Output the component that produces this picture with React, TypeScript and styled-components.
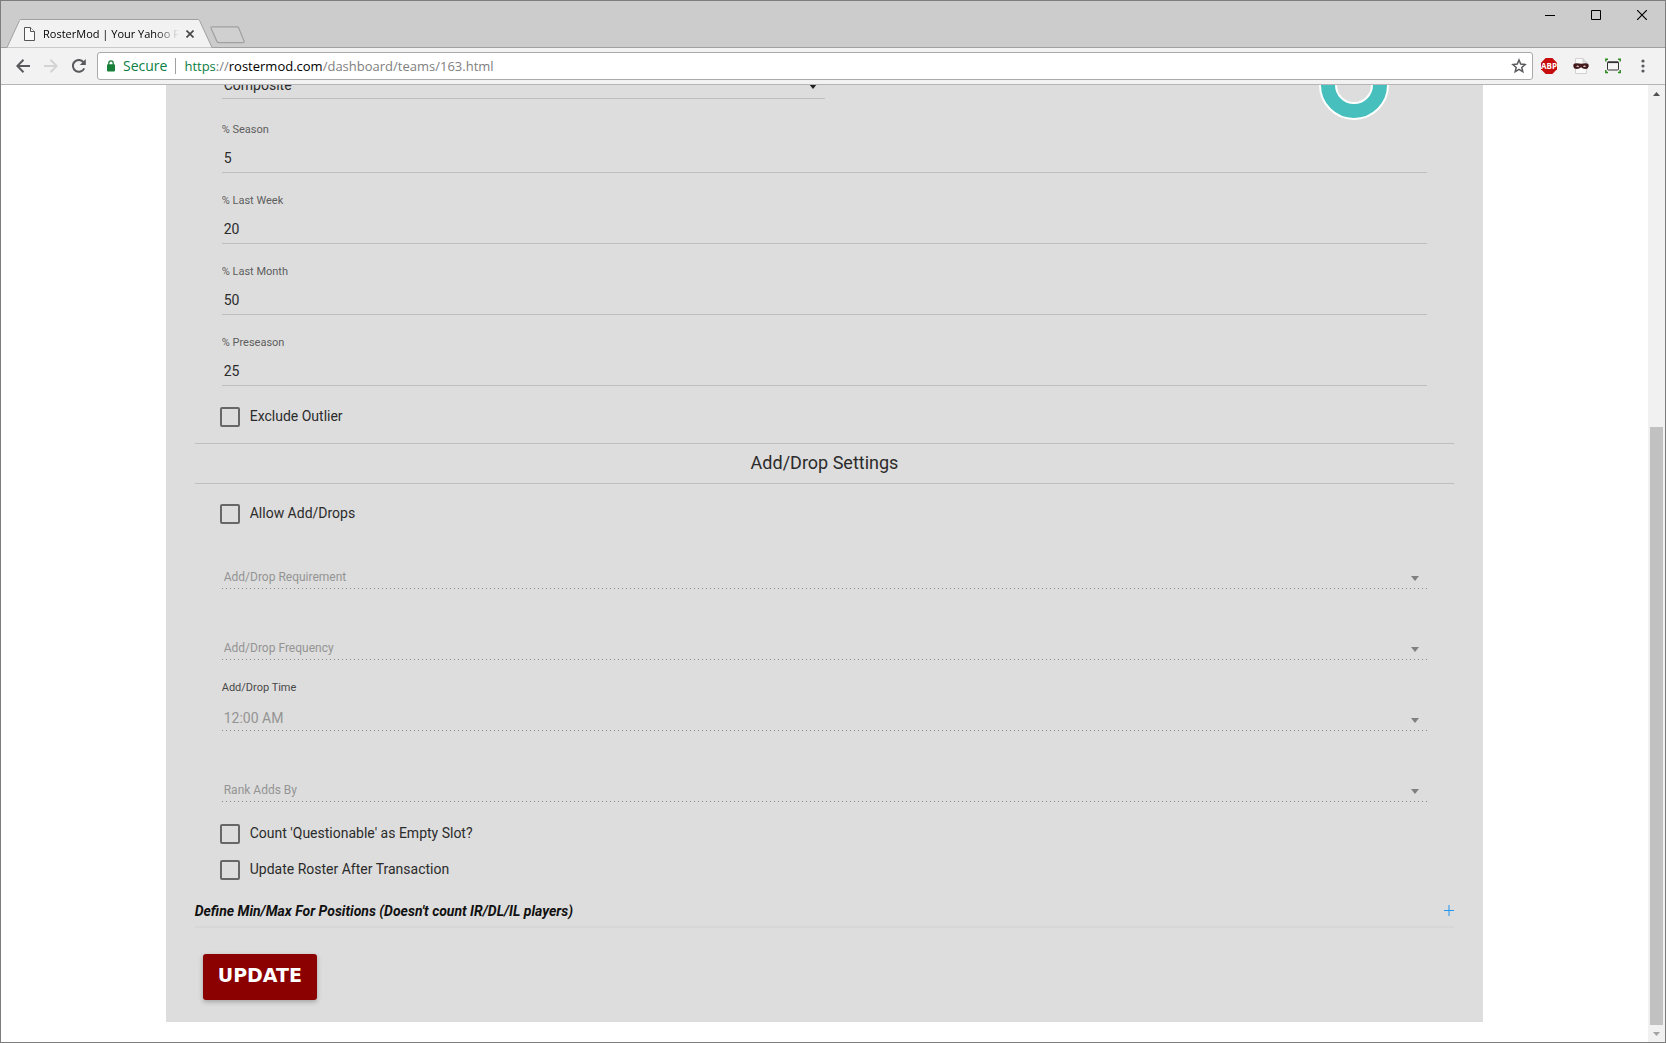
import React from "react";
import styled, { createGlobalStyle } from "styled-components";

const GlobalStyle = createGlobalStyle`
  *, *::before, *::after { box-sizing: border-box; }
  body { margin: 0; }
`;

const uiFont = `"Open Sans", "Noto Sans", sans-serif`;
const pageFont = `Roboto, "Liberation Sans", sans-serif`;

/* ---------- Browser window ---------- */

const BrowserWindow = styled.div`
  display: flex;
  flex-direction: column;
  height: 100vh;
  border: 1px solid #7d7d7d;
  background: #fff;
  font-family: ${uiFont};
`;

const TitleBar = styled.header`
  display: flex;
  align-items: flex-end;
  justify-content: space-between;
  flex: none;
  height: 47px;
  padding-left: 6px;
  background: #ccc;
  border-bottom: 1px solid #a0a0a0;
`;

const TabStrip = styled.div`
  display: flex;
  align-items: flex-end;
`;

const Tab = styled.div`
  position: relative;
  display: flex;
  align-items: center;
  width: 206px;
  height: 29px;
  margin-bottom: -1px;
  padding: 1px 10px 0 17px;
`;

const TabShape = styled.svg`
  position: absolute;
  inset: 0;
`;

const TabIcon = styled.svg`
  position: relative;
  flex: none;
`;

const TabTitle = styled.span`
  position: relative;
  flex: none;
  width: 136px;
  margin-left: 8px;
  white-space: nowrap;
  font-size: 11px;
  line-height: 16px;
  color: #000;
  mask-image: linear-gradient(to right, #000 112px, transparent 136px);
`;

const PlainButton = styled.button`
  display: flex;
  align-items: center;
  justify-content: center;
  flex: none;
  padding: 0;
  border: 0;
  background: none;
  color: #5a5a5e;
`;

const TabClose = styled(PlainButton)`
  position: relative;
  width: 16px;
  height: 16px;
  margin-left: 3px;
`;

const NewTab = styled(PlainButton)`
  margin: 0 0 3px -3px;
`;

const WindowControls = styled.div`
  display: flex;
  align-self: flex-start;
`;

const WindowButton = styled(PlainButton)`
  width: 46px;
  height: 28px;
  color: #000;
`;

const Toolbar = styled.div`
  display: flex;
  align-items: center;
  flex: none;
  height: 37px;
  padding: 0 8px;
  background: #f2f2f2;
  border-bottom: 1px solid #b6b4b6;
`;

const NavButton = styled(PlainButton)<{ $muted?: boolean }>`
  width: 28px;
  height: 28px;
  color: ${(p) => (p.$muted ? "#d3d3d3" : "#5a5a5e")};
`;

const AddressBar = styled.div`
  display: flex;
  align-items: center;
  flex: 1;
  min-width: 0;
  height: 28px;
  margin-left: 4px;
  padding: 0 5px 0 9px;
  background: #fff;
  border: 1px solid #a9a9a9;
  border-radius: 3px;
  font-size: 14px;
  line-height: 20px;
  white-space: nowrap;
`;

const Secure = styled.span`
  margin-left: 8px;
  padding-right: 8px;
  color: #0b8043;
`;

const UrlDivider = styled.span`
  width: 1px;
  height: 16px;
  margin-right: 8px;
  background: #a0a0a0;
`;

const Url = styled.span`
  flex: 1;
  min-width: 0;
  overflow: hidden;
  font-size: 13px;
  color: #808080;
`;

const Scheme = styled.span`
  color: #0b8043;
`;

const Host = styled.span`
  color: #000;
`;

const Extensions = styled.div`
  display: flex;
  flex: none;
`;

const ExtensionButton = styled(PlainButton)`
  width: 32px;
  height: 28px;
`;

const MenuButton = styled(ExtensionButton)`
  width: 28px;
`;

/* ---------- Viewport and scroll bar ---------- */

const Viewport = styled.div`
  display: flex;
  flex: 1;
  min-height: 0;
`;

/* The page rests at the end of its scroll range. */
const ScrolledPage = styled.main`
  display: flex;
  flex-direction: column;
  align-items: center;
  justify-content: flex-end;
  flex: 1;
  min-width: 0;
  overflow: hidden;
  padding-bottom: 20px;
  font-family: ${pageFont};
  font-size: 14px;
  color: #2b2b2b;
`;

const ScrollBar = styled.div`
  display: flex;
  flex-direction: column;
  flex: none;
  width: 17px;
  background: #f1f1f1;
`;

const ScrollArrow = styled(PlainButton)<{ $muted?: boolean }>`
  height: 17px;
  color: ${(p) => (p.$muted ? "#a3a3a3" : "#505050")};
`;

const ScrollTrack = styled.div`
  display: grid;
  grid-template-rows: 325fr 598fr;
  flex: 1;
  padding: 0 2px;
`;

const ScrollThumb = styled.div`
  grid-row: 2;
  background: #c1c1c1;
`;

/* ---------- Settings form ---------- */

const Panel = styled.form`
  flex: none;
  width: 80%;
  padding: 0 29px 22px;
  background: #ddd;
`;

const Section = styled.section`
  padding: 0 27px;
`;

const Fields = styled.div`
  display: flex;
  flex-direction: column;
  gap: 20px;
`;

const TopRow = styled.div`
  display: flex;
  align-items: flex-end;
  justify-content: space-between;
  margin-bottom: 3px;
`;

const Chart = styled.svg`
  flex: none;
  margin: 0 38px -21px 0;
`;

const Field = styled.div<{ $half?: boolean }>`
  display: flex;
  flex-direction: column;
  width: ${(p) => (p.$half ? "50%" : "auto")};
`;

const FieldLabel = styled.label<{ $strong?: boolean }>`
  height: 16px;
  font-size: 11px;
  line-height: 16px;
  color: ${(p) => (p.$strong ? "#484848" : "#5e5e5e")};
`;

const NumberInput = styled.input`
  width: 100%;
  height: 35px;
  padding: 5px 2px 0;
  border: 0;
  border-bottom: 1px solid #bebebe;
  border-radius: 0;
  outline: 0;
  background: none;
  font-family: inherit;
  font-size: 14px;
  color: #2b2b2b;
`;

const SelectBox = styled.div<{ $disabled?: boolean }>`
  display: grid;
  align-items: center;
  height: 35px;
  color: ${(p) => (p.$disabled ? "#808080" : "#212121")};
  background: ${(p) =>
    p.$disabled
      ? "repeating-linear-gradient(to right, #8a8a8a 0 1px, transparent 1px 4px) bottom / 100% 1px no-repeat"
      : "linear-gradient(#bebebe, #bebebe) bottom / 100% 1px no-repeat"};

  > * { grid-area: 1 / 1; }

  > svg { margin-top: ${(p) => (p.$disabled ? "14px" : "10px")}; }
`;

const Select = styled.select<{ $placeholder?: boolean }>`
  appearance: none;
  width: 100%;
  height: 34px;
  padding: 6px 2px 0;
  border: 0;
  border-radius: 0;
  outline: 0;
  background: none;
  font-family: inherit;
  font-size: ${(p) => (p.$placeholder ? "12px" : "14px")};
  color: #2b2b2b;

  &:disabled {
    padding-top: ${(p) => (p.$placeholder ? "11px" : "9px")};
    opacity: 1;
    color: #949494;
  }
`;

const SelectArrow = styled.svg`
  justify-self: end;
  margin-right: 8px;
  pointer-events: none;
`;

const CheckRow = styled.label`
  display: flex;
  align-items: center;
  gap: 10px;
  height: 36px;
  margin-left: -2px;
  padding-bottom: 3px;
  line-height: 20px;
`;

const CheckBox = styled.input`
  appearance: none;
  flex: none;
  width: 20px;
  height: 20px;
  margin: 3px 0 0;
  border: 2px solid #676767;
  border-radius: 2px;
`;

const CheckGroup = styled.div<{ $top: number; $bottom: number }>`
  padding: ${(p) => p.$top}px 0 ${(p) => p.$bottom}px;
`;

const SectionTitle = styled.h2`
  margin: 0;
  padding-bottom: 2px;
  border: solid #bebebe;
  border-width: 1px 0;
  font-size: 18px;
  font-weight: 400;
  line-height: 37px;
  text-align: center;
`;

const Expander = styled.button`
  display: flex;
  align-items: center;
  justify-content: space-between;
  width: 100%;
  height: 40px;
  padding: 7px 0 0;
  border: 0;
  border-bottom: 2px solid #d7d7d7;
  background: none;
  font-family: inherit;
  font-size: 14px;
  font-style: italic;
  font-weight: 700;
  line-height: 20px;
  color: #111;
`;

const SubmitButton = styled.button`
  display: block;
  height: 46px;
  margin: 26px 0 0 8px;
  padding: 0 15px 4px;
  border: 0;
  border-radius: 3px;
  background: #8b0000;
  box-shadow: 0 2px 5px rgba(0, 0, 0, 0.26);
  font-family: "DejaVu Sans", sans-serif;
  font-size: 19px;
  font-weight: 700;
  color: #fff;
`;

/* ---------- Parts ---------- */

const Caret = () => (
  <SelectArrow width="8" height="5" viewBox="0 0 8 5" aria-hidden="true">
    <path d="M0 0h8L4 5z" fill="currentColor" />
  </SelectArrow>
);

type NumberFieldProps = { id: string; label: string; value: string };

const NumberField = ({ id, label, value }: NumberFieldProps) => (
  <Field>
    <FieldLabel htmlFor={id}>{label}</FieldLabel>
    <NumberInput id={id} type="text" inputMode="numeric" defaultValue={value} />
  </Field>
);

type SelectFieldProps = {
  id: string;
  value: string;
  label?: string;
  disabled?: boolean;
  half?: boolean;
  name?: string;
};

const SelectField = ({ id, value, label, disabled, half, name }: SelectFieldProps) => (
  <Field $half={half}>
    <FieldLabel htmlFor={id} $strong>{label}</FieldLabel>
    <SelectBox $disabled={disabled}>
      <Select
        id={id}
        disabled={disabled}
        $placeholder={disabled && !label}
        aria-label={label ? undefined : name ?? value}
      >
        <option>{value}</option>
      </Select>
      <Caret />
    </SelectBox>
  </Field>
);

const Check = ({ label }: { label: string }) => (
  <CheckRow>
    <CheckBox type="checkbox" />
    {label}
  </CheckRow>
);

const Chrome = () => (
  <>
    <TitleBar>
      <TabStrip>
        <Tab>
          <TabShape width="206" height="29" viewBox="0 0 206 29" aria-hidden="true">
            <path d="M0 28.5 12.5 1.5Q13 .5 14 .5H191Q192 .5 192.500 1.500L205 28.500" fill="#f2f2f2" stroke="#a0a0a0" />
          </TabShape>
          <TabIcon width="11" height="14" viewBox="0 0 11 14" fill="#fafafa" stroke="#555" aria-hidden="true">
            <path d="M.5.5h6l4 4v9H.5z" />
            <path d="M6.500.500v4h4" />
          </TabIcon>
          <TabTitle>RosterMod | Your Yahoo F</TabTitle>
          <TabClose aria-label="Close tab">
            <svg width="8" height="8" viewBox="0 0 8 8" stroke="#444" strokeWidth="1.6">
              <path d="M.5.5l7 7M7.500.500l-7 7" />
            </svg>
          </TabClose>
        </Tab>
        <NewTab aria-label="New tab">
          <svg width="35" height="18" viewBox="0 0 35 18">
            <path d="M2 .8H27Q28 .8 28.600 1.700L34 15Q34.400 16.700 33 16.700H9Q7.500 16.700 7 15.500L1 2.200Q.6 .8 2 .8Z" fill="#d0d0d0" stroke="#a0a0a0" strokeWidth="1.200" />
          </svg>
        </NewTab>
      </TabStrip>
      <WindowControls>
        <WindowButton aria-label="Minimize">
          <svg width="10" height="10" viewBox="0 0 10 10"><path d="M0 5.500h10" stroke="currentColor" /></svg>
        </WindowButton>
        <WindowButton aria-label="Maximize">
          <svg width="10" height="10" viewBox="0 0 10 10"><path d="M.5.500h9v9h-9z" fill="none" stroke="currentColor" /></svg>
        </WindowButton>
        <WindowButton aria-label="Close">
          <svg width="10" height="10" viewBox="0 0 10 10"><path d="M0 0l10 10M10 0L0 10" stroke="currentColor" strokeWidth="1.200" /></svg>
        </WindowButton>
      </WindowControls>
    </TitleBar>
    <Toolbar>
      <NavButton aria-label="Back">
        <svg width="14" height="14" viewBox="0 0 14 14" fill="none" stroke="currentColor" strokeWidth="2">
          <path d="M14 7H1.500M7.500.700 1.300 7l6.200 6.300" />
        </svg>
      </NavButton>
      <NavButton aria-label="Forward" $muted>
        <svg width="14" height="14" viewBox="0 0 14 14" fill="none" stroke="currentColor" strokeWidth="2">
          <path d="M0 7h12.500M6.500.700 12.700 7l-6.200 6.300" />
        </svg>
      </NavButton>
      <NavButton aria-label="Reload">
        <svg width="14" height="14" viewBox="0 0 14 14" fill="none" stroke="currentColor" strokeWidth="2">
          <path d="M12.200 9.300A5.900 5.900 0 1 1 11.300 3L12 4" />
          <path d="M13.800 0v6H7.800z" fill="currentColor" stroke="none" />
        </svg>
      </NavButton>
      <AddressBar>
        <svg width="8" height="12" viewBox="0 0 8 12" aria-hidden="true">
          <path d="M1.800 5V3a2.200 2.200 0 0 1 4.400 0v2" fill="none" stroke="#188038" strokeWidth="1.300" />
          <rect y="4.200" width="8" height="7.300" rx="1" fill="#188038" />
        </svg>
        <Secure>Secure</Secure>
        <UrlDivider />
        <Url>
          <Scheme>https</Scheme>://<Host>rostermod.com</Host>/dashboard/teams/163.html
        </Url>
        <PlainButton aria-label="Bookmark this page">
          <svg width="16" height="16" viewBox="0 0 16 16" fill="none" stroke="currentColor" strokeWidth="1.500">
            <path d="M8 2l1.700 4.100 4.400.4-3.300 2.900 1 4.300L8 11.400l-3.800 2.300 1-4.300L1.900 6.500l4.400-.4z" />
          </svg>
        </PlainButton>
      </AddressBar>
      <Extensions>
        <ExtensionButton aria-label="Adblock Plus">
          <svg width="16" height="16" viewBox="0 0 16 16">
            <path d="M4.700 0h6.600L16 4.700v6.600L11.300 16H4.700L0 11.300V4.700z" fill="#c70d0d" />
            <text x="8" y="11" textAnchor="middle" fontFamily="Open Sans, sans-serif" fontWeight="700" fontSize="8" fill="#fff">ABP</text>
          </svg>
        </ExtensionButton>
        <ExtensionButton aria-label="Private page">
          <svg width="16" height="16" viewBox="0 0 16 16">
            <path d="M2.500.500h7.500l3.500 3.500v11.500h-11z" fill="#fafafa" stroke="#d2d2d2" />
            <path d="M10 .5V4h3.500" fill="#ddd" stroke="#ccc" />
            <path d="M1.500 5.500Q4.500 4.800 8 5.800 11.500 4.800 14.500 5.500 16 6.200 15.700 8.500 15 11 12.500 11 9.500 11 8 9.300 6.500 11 3.500 11 1 11 .3 8.500 0 6.200 1.500 5.500z" fill="#43191b" />
            <path d="M3 8.200q1.700-1.300 3.200.2-1.500 1.200-3.200-.2zM10 8.400q1.500-1.500 3.200-.2-1.700 1.400-3.200.2z" fill="#d8cccc" />
          </svg>
        </ExtensionButton>
        <ExtensionButton aria-label="Capture page">
          <svg width="16" height="16" viewBox="0 0 16 16" fill="none">
            <path d="M.8 3.500V1.300H3M13 1.300h2.200v2.200M15.200 12v2.500H13M3 14.500H.8V12" stroke="#2e8b20" strokeWidth="1.500" />
            <rect x="2.500" y="4" width="11" height="8" rx="1" fill="#f5f5f5" stroke="#333" />
            <path d="M2.500 4.300h11" stroke="#333" strokeWidth="1.600" />
          </svg>
        </ExtensionButton>
        <MenuButton aria-label="Menu">
          <svg width="4" height="14" viewBox="0 0 4 14" fill="currentColor">
            <circle cx="2" cy="2" r="1.600" />
            <circle cx="2" cy="7" r="1.600" />
            <circle cx="2" cy="12" r="1.600" />
          </svg>
        </MenuButton>
      </Extensions>
    </Toolbar>
  </>
);

const percentages: NumberFieldProps[] = [
  { id: "season", label: "% Season", value: "5" },
  { id: "last-week", label: "% Last Week", value: "20" },
  { id: "last-month", label: "% Last Month", value: "50" },
  { id: "preseason", label: "% Preseason", value: "25" },
];

export default function App() {
  return (
    <BrowserWindow>
      <GlobalStyle />
      <Chrome />
      <Viewport>
        <ScrolledPage>
          <Panel onSubmit={(e: React.FormEvent) => e.preventDefault()}>
            <Section>
              <Fields>
                <TopRow>
                  <SelectField id="ranking" value="Composite" name="Ranking" half />
                  <Chart width="70" height="70" viewBox="0 0 70 70" aria-hidden="true">
                    <circle cx="35" cy="35" r="26" fill="none" stroke="#fff" strokeWidth="18" />
                    <circle cx="35" cy="35" r="26" fill="none" stroke="#46bfbd" strokeWidth="14" />
                  </Chart>
                </TopRow>
                {percentages.map((field) => (
                  <NumberField key={field.id} {...field} />
                ))}
              </Fields>
              <CheckGroup $top={13} $bottom={8}>
                <Check label="Exclude Outlier" />
              </CheckGroup>
            </Section>
            <SectionTitle>Add/Drop Settings</SectionTitle>
            <Section>
              <CheckGroup $top={12} $bottom={6}>
                <Check label="Allow Add/Drops" />
              </CheckGroup>
              <Fields>
                <SelectField id="requirement" value="Add/Drop Requirement" disabled />
                <SelectField id="frequency" value="Add/Drop Frequency" disabled />
                <SelectField id="time" label="Add/Drop Time" value="12:00 AM" disabled />
                <SelectField id="rank" value="Rank Adds By" disabled />
              </Fields>
              <CheckGroup $top={14} $bottom={0}>
                <Check label="Count 'Questionable' as Empty Slot?" />
                <Check label="Update Roster After Transaction" />
              </CheckGroup>
            </Section>
            <Expander type="button">
              Define Min/Max For Positions (Doesn't count IR/DL/IL players)
              <svg width="10" height="11" viewBox="0 0 10 11" aria-hidden="true">
                <path d="M5 0v11" stroke="#2196f3" strokeOpacity="0.500" strokeWidth="2" />
                <path d="M0 5.500h10" stroke="#2196f3" />
              </svg>
            </Expander>
            <SubmitButton type="submit">UPDATE</SubmitButton>
          </Panel>
        </ScrolledPage>
        <ScrollBar>
          <ScrollArrow type="button" aria-label="Scroll up">
            <svg width="7" height="4" viewBox="0 0 7 4"><path d="M3.500 0 7 4H0z" fill="currentColor" /></svg>
          </ScrollArrow>
          <ScrollTrack>
            <ScrollThumb />
          </ScrollTrack>
          <ScrollArrow type="button" aria-label="Scroll down" $muted>
            <svg width="7" height="4" viewBox="0 0 7 4"><path d="M0 0h7L3.500 4z" fill="currentColor" /></svg>
          </ScrollArrow>
        </ScrollBar>
      </Viewport>
    </BrowserWindow>
  );
}
